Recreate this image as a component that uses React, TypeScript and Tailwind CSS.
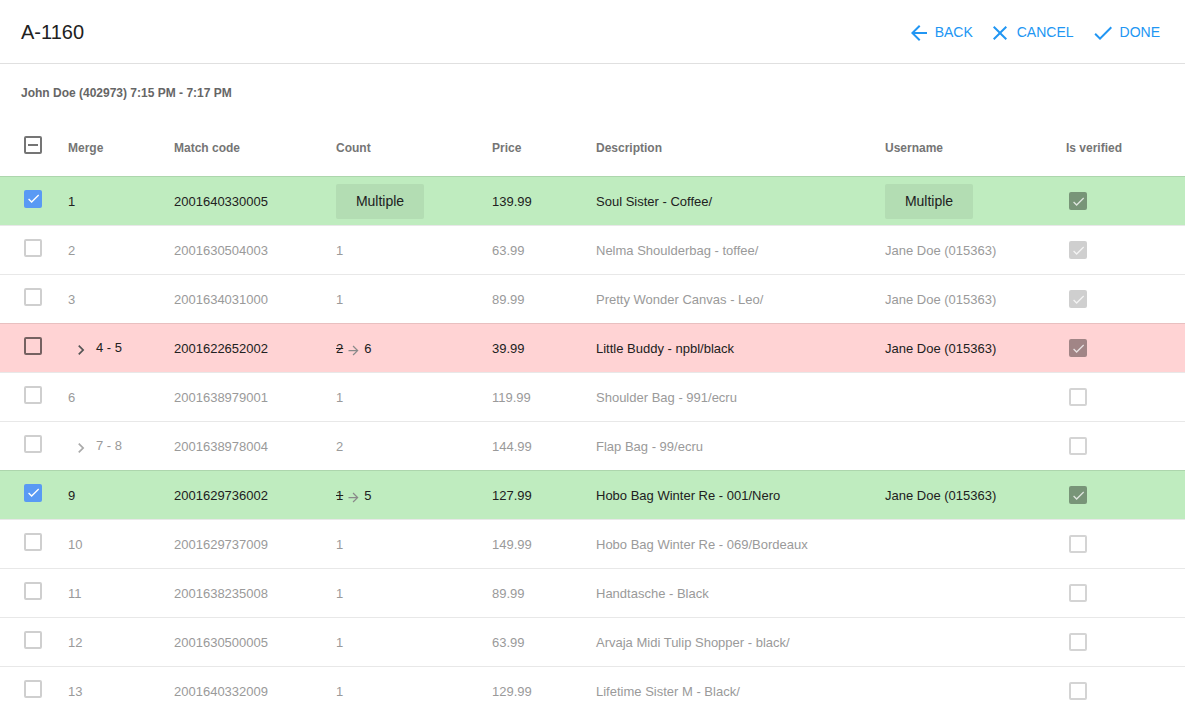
import React from 'react'

type Row = {
  merge: string
  group?: boolean
  code: string
  count: string | { from: string; to: string }
  price: string
  description: string
  username: string
  verified: boolean
  selected?: boolean
  tone: 'green' | 'red' | 'plain'
}

const rows: Row[] = [
  { merge: '1', code: '2001640330005', count: 'Multiple', price: '139.99', description: 'Soul Sister - Coffee/', username: 'Multiple', verified: true, selected: true, tone: 'green' },
  { merge: '2', code: '2001630504003', count: '1', price: '63.99', description: 'Nelma Shoulderbag - toffee/', username: 'Jane Doe (015363)', verified: true, tone: 'plain' },
  { merge: '3', code: '2001634031000', count: '1', price: '89.99', description: 'Pretty Wonder Canvas - Leo/', username: 'Jane Doe (015363)', verified: true, tone: 'plain' },
  { merge: '4 - 5', group: true, code: '2001622652002', count: { from: '2', to: '6' }, price: '39.99', description: 'Little Buddy - npbl/black', username: 'Jane Doe (015363)', verified: true, tone: 'red' },
  { merge: '6', code: '2001638979001', count: '1', price: '119.99', description: 'Shoulder Bag - 991/ecru', username: '', verified: false, tone: 'plain' },
  { merge: '7 - 8', group: true, code: '2001638978004', count: '2', price: '144.99', description: 'Flap Bag - 99/ecru', username: '', verified: false, tone: 'plain' },
  { merge: '9', code: '2001629736002', count: { from: '1', to: '5' }, price: '127.99', description: 'Hobo Bag Winter Re - 001/Nero', username: 'Jane Doe (015363)', verified: true, selected: true, tone: 'green' },
  { merge: '10', code: '2001629737009', count: '1', price: '149.99', description: 'Hobo Bag Winter Re - 069/Bordeaux', username: '', verified: false, tone: 'plain' },
  { merge: '11', code: '2001638235008', count: '1', price: '89.99', description: 'Handtasche - Black', username: '', verified: false, tone: 'plain' },
  { merge: '12', code: '2001630500005', count: '1', price: '63.99', description: 'Arvaja Midi Tulip Shopper - black/', username: '', verified: false, tone: 'plain' },
  { merge: '13', code: '2001640332009', count: '1', price: '129.99', description: 'Lifetime Sister M - Black/', username: '', verified: false, tone: 'plain' },
]

const cols = 'grid grid-cols-[44px_106px_162px_156px_104px_289px_181px_1fr] items-center pl-6'

function CheckIcon({ className }: { className?: string }) {
  return (
    <svg viewBox="0 0 24 24" className={className} fill="currentColor">
      <path d="M9 16.17L4.83 12l-1.42 1.41L9 19 21 7l-1.41-1.41z" />
    </svg>
  )
}

function SelectBox({ checked, active }: { checked?: boolean; active: boolean }) {
  if (checked)
    return (
      <div className="w-[18px] h-[18px] rounded-[2px] bg-[#599af4] flex items-center justify-center -mt-[7px]">
        <CheckIcon className="w-[15px] h-[15px] text-white" />
      </div>
    )
  return (
    <div
      className={`w-[18px] h-[18px] rounded-[2px] border-2 -mt-[7px] ${
        active ? 'border-[rgba(0,0,0,0.54)]' : 'border-[#cfcfcf]'
      }`}
    />
  )
}

function VerifiedBox({ checked, active }: { checked: boolean; active: boolean }) {
  if (checked)
    return (
      <div
        className={`ml-[3px] -mt-[2px] w-[18px] h-[18px] rounded-[2px] flex items-center justify-center ${
          active ? 'bg-[rgba(0,0,0,0.37)]' : 'bg-[rgba(0,0,0,0.19)]'
        }`}
      >
        <CheckIcon className="w-[15px] h-[15px] text-white/75" />
      </div>
    )
  return <div className="ml-[3px] -mt-[2px] w-[18px] h-[18px] rounded-[2px] border-2 border-[#d4d4d4]" />
}

function Chevron({ className }: { className?: string }) {
  return (
    <svg viewBox="0 0 24 24" className={className} fill="currentColor">
      <path d="M10 6L8.59 7.41 13.17 12l-4.58 4.59L10 18l6-6z" />
    </svg>
  )
}

function Chip() {
  return (
    <div className="w-[88px] h-[35px] -mt-[2px] rounded-[2px] bg-[#b3ddb3] flex items-center justify-center text-[14px]">
      Multiple
    </div>
  )
}

export default function App() {
  return (
    <div className="w-[1185px] h-[711px] overflow-hidden bg-white font-['Liberation_Sans',Arial,sans-serif]">
      <div className="h-[64px] flex items-center justify-between border-b border-[#e0e0e0] pl-[21px] pr-[17px]">
        <h1 className="text-[20px] text-[#212121]">A-1160</h1>
        <div className="flex items-center text-[#2196f3] text-[14px] mt-[2px]">
          <button className="flex items-center gap-1 px-2">
            <svg viewBox="0 0 24 24" className="w-6 h-6" fill="currentColor">
              <path d="M20 11H7.83l5.59-5.59L12 4l-8 8 8 8 1.41-1.41L7.83 13H20v-2z" />
            </svg>
            BACK
          </button>
          <button className="flex items-center gap-[5px] px-2 ml-[-1px]">
            <svg viewBox="0 0 24 24" className="w-6 h-6" fill="currentColor">
              <path d="M19 6.41L17.59 5 12 10.59 6.41 5 5 6.41 10.59 12 5 17.59 6.41 19 12 13.41 17.59 19 19 17.59 13.41 12z" />
            </svg>
            CANCEL
          </button>
          <button className="flex items-center gap-[5px] px-2 ml-[1px]">
            <svg viewBox="0 0 24 24" className="w-6 h-6" fill="currentColor">
              <path d="M9 16.17L4.83 12l-1.42 1.41L9 19 21 7l-1.41-1.41z" />
            </svg>
            DONE
          </button>
        </div>
      </div>

      <div className="h-[56px] flex items-center pl-[21px] pt-[2px] text-[12px] font-bold text-[#666]">
        John Doe (402973) 7:15 PM - 7:17 PM
      </div>

      <div className={`${cols} h-[56px] text-[12px] font-bold text-[#757575]`}>
        <div className="w-[18px] h-[18px] rounded-[2px] border-2 border-[#757575] flex items-center justify-center -mt-[6px]">
          <div className="w-[10px] h-[2px] bg-[#757575]" />
        </div>
        <div>Merge</div>
        <div>Match code</div>
        <div>Count</div>
        <div>Price</div>
        <div>Description</div>
        <div>Username</div>
        <div>Is verified</div>
      </div>

      {rows.map((row, i) => {
        const active = row.tone !== 'plain'
        const bg =
          row.tone === 'green' ? 'bg-[#bfecbf]' : row.tone === 'red' ? 'bg-[#ffd3d4]' : 'bg-white'
        const text = active ? 'text-[#212121]' : 'text-[#9a9a9a]'
        return (
          <div
            key={i}
            className={`${cols} h-[49px] pt-[2px] border-t border-[rgba(0,0,0,0.09)] text-[13px] ${bg} ${text}`}
          >
            <SelectBox checked={row.selected} active={active} />
            <div className="flex items-center">
              {row.group ? (
                <>
                  <Chevron
                    className={`w-5 h-5 ml-[3px] mt-[2px] ${active ? 'text-[#555]' : 'text-[#aaa]'}`}
                  />
                  <span className="ml-[5px] -mt-[2px]">{row.merge}</span>
                </>
              ) : (
                row.merge
              )}
            </div>
            <div>{row.code}</div>
            <div>
              {row.count === 'Multiple' ? (
                <Chip />
              ) : typeof row.count === 'string' ? (
                row.count
              ) : (
                <span className="flex items-center">
                  <span className="line-through">{row.count.from}</span>
                  <svg viewBox="0 0 24 24" className="w-[15px] h-[15px] mx-[3px] mt-[2px] text-[#8a8a8a]" fill="currentColor">
                    <path d="M12 4l-1.41 1.41L16.17 11H4v2h12.17l-5.58 5.59L12 20l8-8z" />
                  </svg>
                  <span>{row.count.to}</span>
                </span>
              )}
            </div>
            <div>{row.price}</div>
            <div>{row.description}</div>
            <div>{row.username === 'Multiple' ? <Chip /> : row.username}</div>
            <VerifiedBox checked={row.verified} active={active} />
          </div>
        )
      })}
    </div>
  )
}
